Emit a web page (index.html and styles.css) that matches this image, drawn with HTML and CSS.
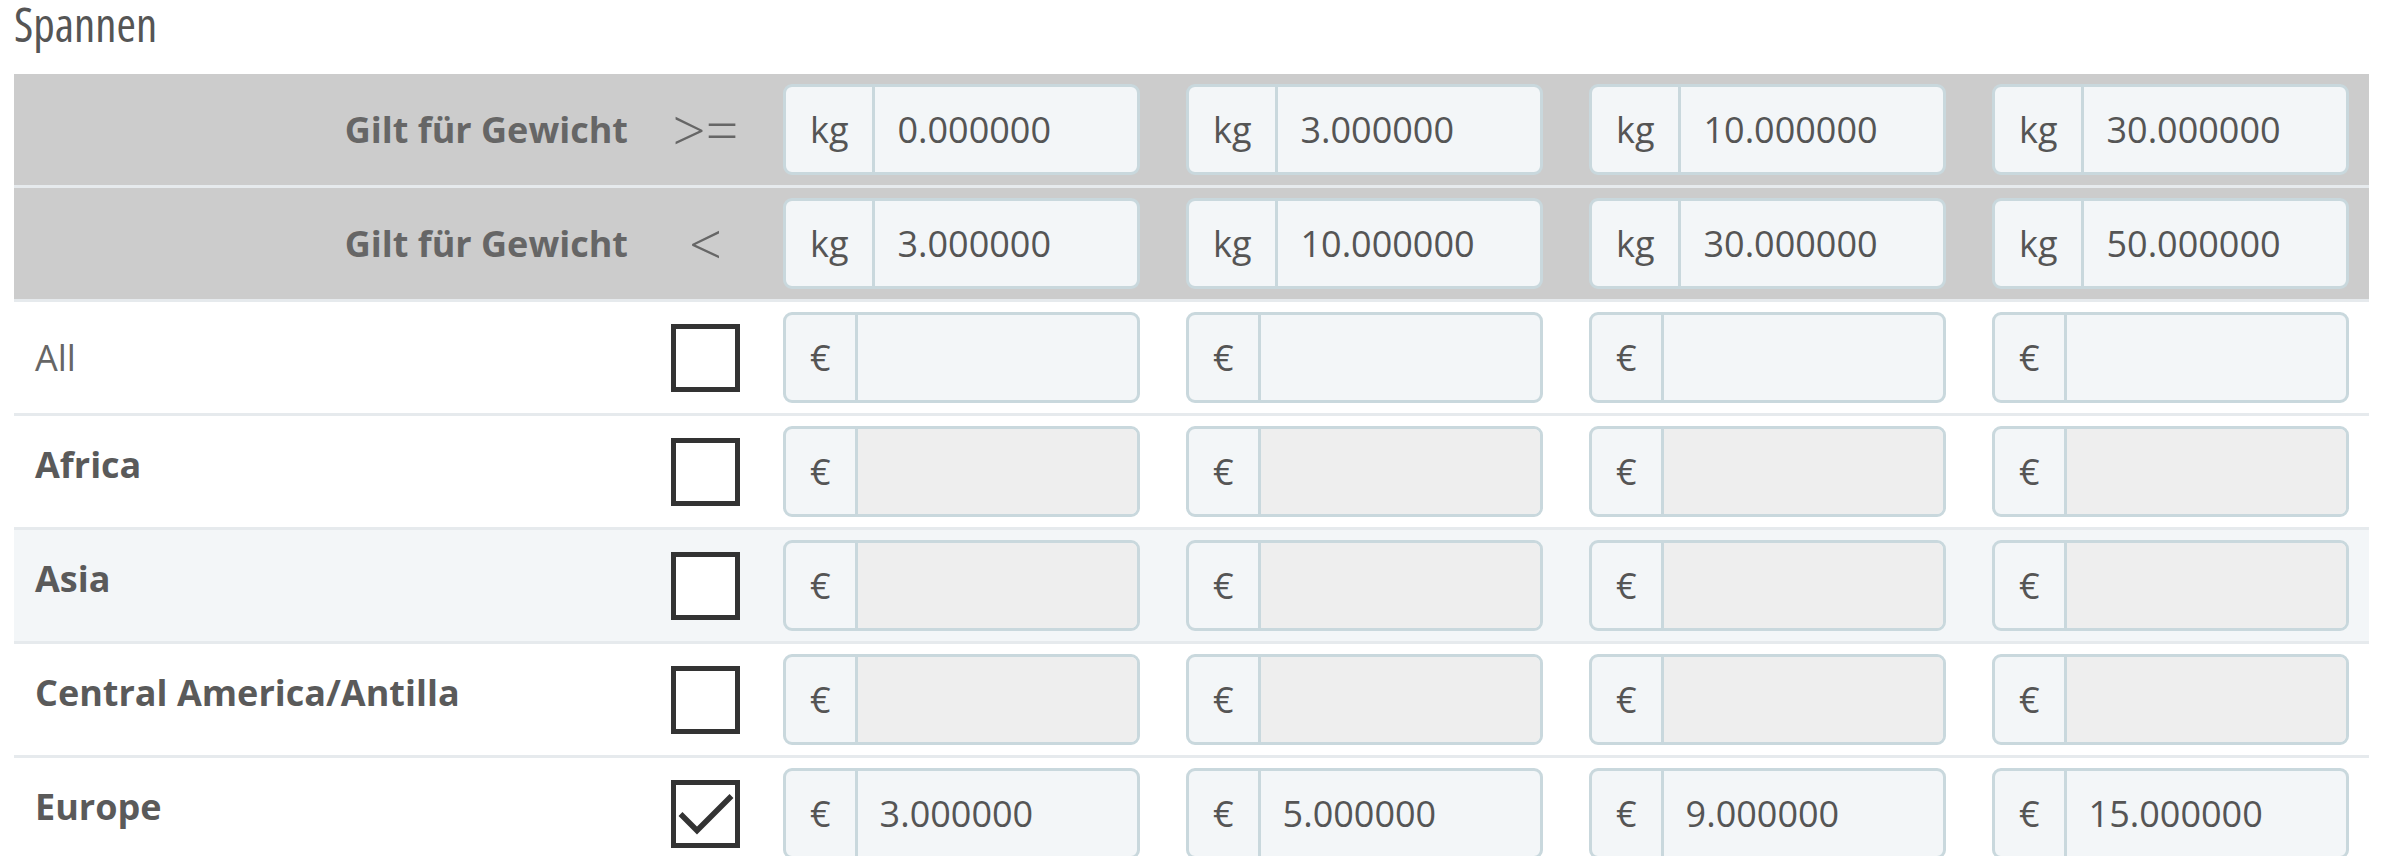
FILE: index.html
```html
<!DOCTYPE html>
<html lang="de">
<head>
<meta charset="utf-8">
<title>Spannen</title>
<link rel="stylesheet" href="styles.css">
</head>
<body>
<div class="page">
  <h3 class="title">Spannen</h3>
  <div class="ranges">
    <div class="row head">
      <div class="label">Gilt für Gewicht</div>
      <div class="sym">&gt;=</div>
      <div class="ig"><span class="addon">kg</span><span class="val">0.000000</span></div>
      <div class="ig"><span class="addon">kg</span><span class="val">3.000000</span></div>
      <div class="ig"><span class="addon">kg</span><span class="val">10.000000</span></div>
      <div class="ig"><span class="addon">kg</span><span class="val">30.000000</span></div>
    </div>
    <div class="row head">
      <div class="label">Gilt für Gewicht</div>
      <div class="sym">&lt;</div>
      <div class="ig"><span class="addon">kg</span><span class="val">3.000000</span></div>
      <div class="ig"><span class="addon">kg</span><span class="val">10.000000</span></div>
      <div class="ig"><span class="addon">kg</span><span class="val">30.000000</span></div>
      <div class="ig"><span class="addon">kg</span><span class="val">50.000000</span></div>
    </div>
    <div class="row">
      <div class="label plain">All</div>
      <div class="sym"><span class="cb"></span></div>
      <div class="ig"><span class="addon">€</span><span class="val"></span></div>
      <div class="ig"><span class="addon">€</span><span class="val"></span></div>
      <div class="ig"><span class="addon">€</span><span class="val"></span></div>
      <div class="ig"><span class="addon">€</span><span class="val"></span></div>
    </div>
    <div class="row">
      <div class="label zone">Africa</div>
      <div class="sym"><span class="cb"></span></div>
      <div class="ig"><span class="addon">€</span><span class="val off"></span></div>
      <div class="ig"><span class="addon">€</span><span class="val off"></span></div>
      <div class="ig"><span class="addon">€</span><span class="val off"></span></div>
      <div class="ig"><span class="addon">€</span><span class="val off"></span></div>
    </div>
    <div class="row alt">
      <div class="label zone">Asia</div>
      <div class="sym"><span class="cb"></span></div>
      <div class="ig"><span class="addon">€</span><span class="val off"></span></div>
      <div class="ig"><span class="addon">€</span><span class="val off"></span></div>
      <div class="ig"><span class="addon">€</span><span class="val off"></span></div>
      <div class="ig"><span class="addon">€</span><span class="val off"></span></div>
    </div>
    <div class="row">
      <div class="label zone">Central America/Antilla</div>
      <div class="sym"><span class="cb"></span></div>
      <div class="ig"><span class="addon">€</span><span class="val off"></span></div>
      <div class="ig"><span class="addon">€</span><span class="val off"></span></div>
      <div class="ig"><span class="addon">€</span><span class="val off"></span></div>
      <div class="ig"><span class="addon">€</span><span class="val off"></span></div>
    </div>
    <div class="row">
      <div class="label zone">Europe</div>
      <div class="sym"><span class="cb checked"><svg viewBox="0 0 69 68" width="69" height="68"><path d="M9.5 34 L26 50.5 L60.5 16" fill="none" stroke="#333" stroke-width="5.5"/></svg></span></div>
      <div class="ig"><span class="addon">€</span><span class="val">3.000000</span></div>
      <div class="ig"><span class="addon">€</span><span class="val">5.000000</span></div>
      <div class="ig"><span class="addon">€</span><span class="val">9.000000</span></div>
      <div class="ig"><span class="addon">€</span><span class="val">15.000000</span></div>
    </div>
  </div>
</div>
</body>
</html>
```
FILE: styles.css
```css
html, body {
  margin: 0;
  padding: 0;
  background: #ffffff;
}
body {
  font-family: "Open Sans", "Noto Sans", sans-serif;
  color: #555555;
}
.page {
  padding: 0 24px 0 14px;
}
.title {
  margin: 0;
  height: 74px;
  font-family: "Open Sans", sans-serif;
  font-stretch: 75%;
  font-weight: 400;
  font-size: 47px;
  line-height: 48px;
  color: #555555;
}
.ranges {
  display: flex;
  flex-direction: column;
}
.row {
  display: grid;
  grid-template-columns: 593px 63px repeat(4, 357px);
  column-gap: 46px;
  align-items: center;
  padding: 10px 20px 10px 21px;
  border-bottom: 3px solid #e6eaed;
  background: #ffffff;
}
.row.head {
  background: #cccccc;
}
.row.alt {
  background: #f3f6f8;
}
.label {
  font-size: 36px;
  font-weight: 700;
  color: #666666;
}
.head .label {
  text-align: right;
}
.label.plain {
  font-weight: 400;
  color: #666666;
}
.label.zone {
  color: #5a5a5a;
  padding-bottom: 14px;
}
.sym {
  display: flex;
  justify-content: center;
  font-size: 58px;
  font-weight: 300;
  color: #666666;
  white-space: nowrap;
}
.cb {
  flex: none;
  box-sizing: border-box;
  width: 69px;
  height: 68px;
  border: 5px solid #333333;
  background: #ffffff;
  position: relative;
}
.cb svg {
  position: absolute;
  left: -5px;
  top: -5px;
}
.ig {
  display: flex;
  box-sizing: border-box;
  height: 91px;
  border: 3px solid #c9d8dd;
  border-radius: 9px;
  background: #f3f6f8;
  font-size: 36px;
  color: #555555;
  overflow: hidden;
}
.addon {
  display: flex;
  align-items: center;
  padding: 0 24px;
  border-right: 3px solid #c9d8dd;
}
.val {
  flex: 1;
  display: flex;
  align-items: center;
  padding: 0 22px;
}
.val.off {
  background: #eeeeee;
}
```
